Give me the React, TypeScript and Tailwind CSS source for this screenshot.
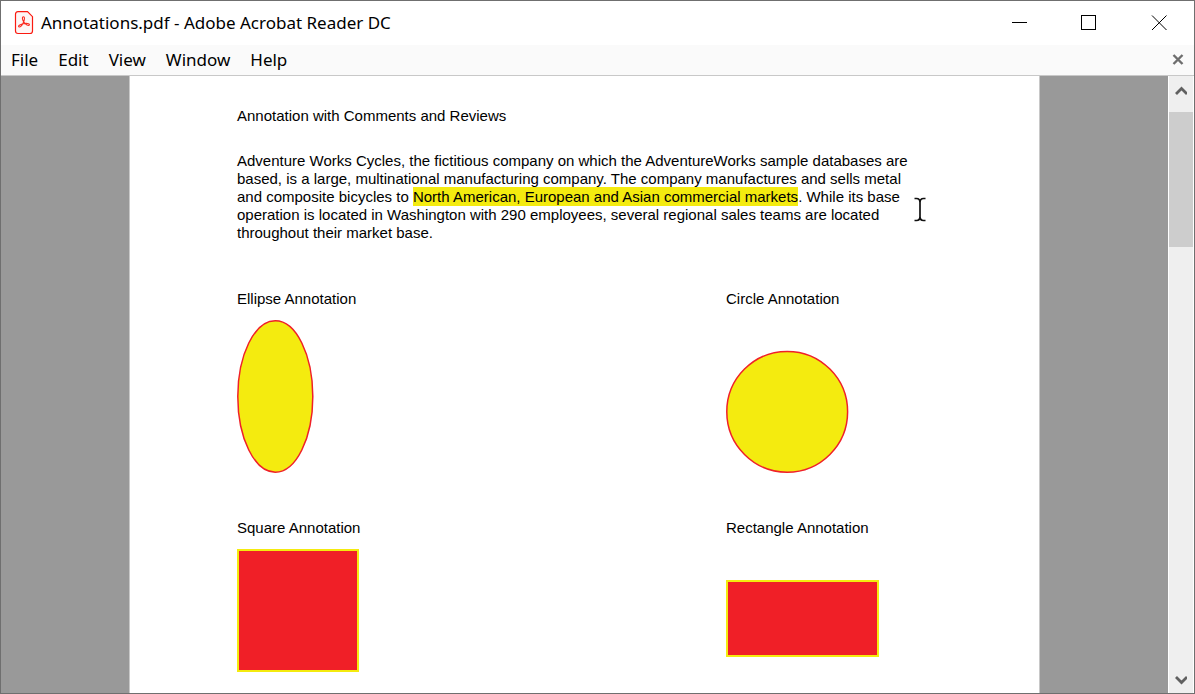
import type { ReactNode } from "react";

const menus = ["File", "Edit", "View", "Window", "Help"];

function PdfIcon() {
  return (
    <svg className="h-6 w-5 shrink-0" viewBox="0 0 20 24" fill="none" aria-hidden="true">
      <path
        d="M4 0.700H13.500L18.500 5.700V20Q18.500 22.500 16 22.500H4Q1.500 22.500 1.500 20V3.200Q1.500 0.700 4 0.700Z"
        fill="#fdf6f6"
        stroke="#fa1a10"
        strokeWidth="1.2"
      />
      <path
        d="M9.600 10.800C8.300 8.600 7.900 5.800 9.400 5.800C11 5.800 10.600 9 9.300 11.800C8.100 14.400 6.100 16.500 4.900 15.800C3.700 15 6 13.500 9 12.700C12 12 15.900 12.300 15.400 13.800C14.900 15.200 11.400 13.700 9.600 10.800Z"
        stroke="#fa2a20"
        strokeWidth="1.100"
        strokeLinejoin="round"
      />
    </svg>
  );
}

function WindowButton({ label, children }: { label: string; children: ReactNode }) {
  return (
    <button type="button" aria-label={label} className="flex h-full w-[70px] items-center justify-center">
      <svg className="h-4 w-4" viewBox="0 0 16 16" fill="none" stroke="#000" aria-hidden="true">
        {children}
      </svg>
    </button>
  );
}

function Chevron({ path }: { path: string }) {
  return (
    <svg className="h-3 w-3" viewBox="0 0 12 12" fill="none" stroke="#606060" strokeWidth="2.800" aria-hidden="true">
      <path d={path} />
    </svg>
  );
}

function Annotation({ title, children }: { title: string; children: ReactNode }) {
  return (
    <section className="flex flex-col gap-3">
      <h2>{title}</h2>
      {children}
    </section>
  );
}

export default function App() {
  return (
    <div className="flex h-screen flex-col overflow-hidden border border-[#6f6f6f] bg-white font-['Noto_Sans',sans-serif] text-black">
      <header className="flex h-11 shrink-0 items-center justify-between pl-[13px]">
        <div className="flex items-center gap-[7px]">
          <PdfIcon />
          <h1 className="text-[17px] leading-6">Annotations.pdf - Adobe Acrobat Reader DC</h1>
        </div>
        <div className="flex h-full">
          <WindowButton label="Minimize">
            <path d="M1 7.500H16" />
          </WindowButton>
          <WindowButton label="Maximize">
            <rect x="0.500" y="0.500" width="14" height="14" />
          </WindowButton>
          <WindowButton label="Close">
            <path d="M1 0.500L15.500 15M15.500 0.500L1 15" />
          </WindowButton>
        </div>
      </header>

      <nav className="flex h-[31px] shrink-0 items-center justify-between border-b border-[#c8c8c8] bg-[#fafafa] px-[10px]">
        <div className="flex gap-5">
          {menus.map((menu) => (
            <button key={menu} type="button" className="text-[17px] leading-6">
              {menu}
            </button>
          ))}
        </div>
        <button type="button" aria-label="Close document">
          <svg className="h-3 w-3" viewBox="0 0 12 12" fill="none" stroke="#6e6e6e" strokeWidth="2.400" aria-hidden="true">
            <path d="M1.500 1L10.500 10M10.500 1L1.500 10" />
          </svg>
        </button>
      </nav>

      <div className="flex min-h-0 flex-1">
        <main className="min-w-0 flex-1 overflow-hidden bg-[#999999]">
          <article className="mx-auto min-h-full w-full max-w-[911px] border-x border-[#c8c8c8] bg-white px-[107px] pt-[31px] font-['Liberation_Sans',Arial,sans-serif] text-[15px] leading-[18px]">
            <p>Annotation with Comments and Reviews</p>
            <div className="relative mt-[27px]">
              <p className="max-w-[684px]">
                Adventure Works Cycles, the fictitious company on which the AdventureWorks sample databases are
                based, is a large, multinational manufacturing company. The company manufactures and sells metal
                and composite bicycles to{" "}
                <mark className="bg-[#f4eb0f] py-px text-black">
                  North American, European and Asian commercial markets
                </mark>
                . While its base operation is located in Washington with 290 employees, several regional sales
                teams are located throughout their market base.
              </p>
              <svg
                className="absolute top-[45px] left-[677px] h-[25px] w-3"
                viewBox="0 0 12 25"
                fill="none"
                stroke="#111"
                aria-hidden="true"
              >
                <path
                  d="M0.500 1.500H2.500Q6 1.500 6 5.500Q6 1.500 9.500 1.500H11.500M6 5V20M0.500 23.500H2.500Q6 23.500 6 19.500Q6 23.500 9.500 23.500H11.500"
                  strokeWidth="1.700"
                />
              </svg>
            </div>

            <div className="mt-12 grid grid-cols-[489px_1fr] gap-y-[46px]">
              <Annotation title="Ellipse Annotation">
                <svg className="h-[153px] w-[77px]" viewBox="0 0 77 153" role="img" aria-label="Ellipse">
                  <ellipse cx="38.300" cy="76.500" rx="37.500" ry="75.700" fill="#f4eb0f" stroke="#ef2028" strokeWidth="1.500" />
                </svg>
              </Annotation>
              <Annotation title="Circle Annotation">
                <svg className="mt-[30px] h-[123px] w-[123px]" viewBox="0 0 123 123" role="img" aria-label="Circle">
                  <circle cx="61.200" cy="61.800" r="60.400" fill="#f4eb0f" stroke="#ef2028" strokeWidth="1.500" />
                </svg>
              </Annotation>
              <Annotation title="Square Annotation">
                <div className="h-[123px] w-[122px] border-2 border-[#f4eb0f] bg-[#f01f27]" />
              </Annotation>
              <Annotation title="Rectangle Annotation">
                <div className="mt-[31px] h-[77px] w-[153px] border-2 border-[#f4eb0f] bg-[#f01f27]" />
              </Annotation>
            </div>
          </article>
        </main>

        <aside aria-label="Scroll bar" className="flex w-[26px] shrink-0 flex-col border-x border-white bg-[#efefef]">
          <button type="button" aria-label="Scroll up" className="flex h-9 shrink-0 items-center justify-center pb-2">
            <Chevron path="M1 10L6.500 4.500L12 10" />
          </button>
          <div className="flex-1">
            <div className="h-[135px] bg-[#cdcdcd]" />
          </div>
          <button type="button" aria-label="Scroll down" className="flex h-6 shrink-0 items-center justify-center">
            <Chevron path="M1 2L6.500 7.500L12 2" />
          </button>
        </aside>
      </div>
    </div>
  );
}
